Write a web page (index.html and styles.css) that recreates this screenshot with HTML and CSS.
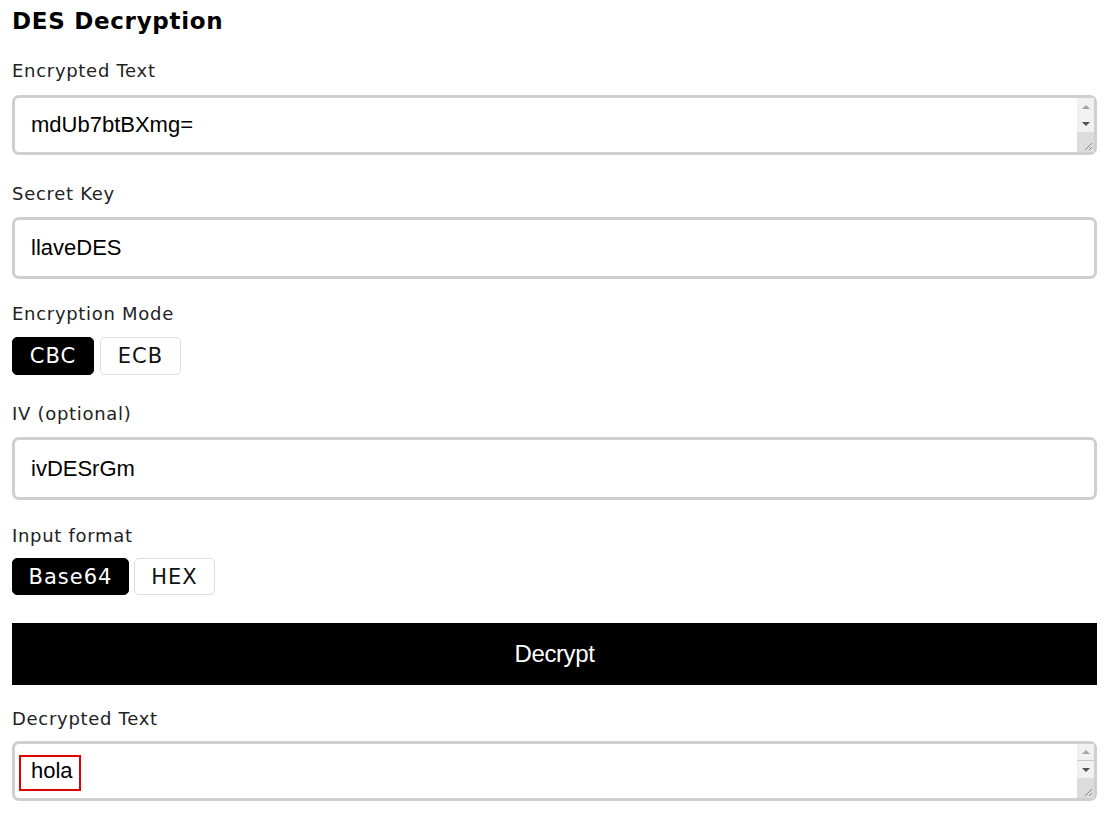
FILE: index.html
```html
<!DOCTYPE html>
<html>
<head>
<meta charset="utf-8">
<link rel="stylesheet" href="styles.css">
</head>
<body>
<div class="page">
  <h1 class="title">DES Decryption</h1>

  <div class="group g1">
    <div class="label">Encrypted Text</div>
    <div class="area-wrap">
      <textarea class="area" spellcheck="false">mdUb7btBXmg=</textarea>
      <div class="sb">
        <div class="sb-btn"><span class="tri-up"></span></div>
        <div class="sb-btn"><span class="tri-down"></span></div>
        <div class="sb-corner">
          <svg width="10" height="10" viewBox="0 0 10 10"><path d="M9 2 L2 9 M9 6 L6 9" stroke="#8a8a8a" stroke-width="1" fill="none"/></svg>
        </div>
      </div>
    </div>
  </div>

  <div class="group g2">
    <div class="label">Secret Key</div>
    <input class="field" type="text" value="llaveDES" spellcheck="false">
  </div>

  <div class="group g3">
    <div class="label">Encryption Mode</div>
    <div class="toggles">
      <button class="tog active">CBC</button>
      <button class="tog">ECB</button>
    </div>
  </div>

  <div class="group g4">
    <div class="label">IV (optional)</div>
    <input class="field field-iv" type="text" value="ivDESrGm" spellcheck="false">
  </div>

  <div class="group g5">
    <div class="label label-if">Input format</div>
    <div class="toggles toggles-if">
      <button class="tog active">Base64</button>
      <button class="tog">HEX</button>
    </div>
  </div>

  <button class="decrypt">Decrypt</button>

  <div class="group g6">
    <div class="label label-if">Decrypted Text</div>
    <div class="area-wrap">
      <textarea class="area" spellcheck="false">hola</textarea>
      <div class="sb">
        <div class="sb-btn sb-btn-sep"><span class="tri-up"></span></div>
        <div class="sb-btn"><span class="tri-down"></span></div>
        <div class="sb-corner">
          <svg width="10" height="10" viewBox="0 0 10 10"><path d="M9 2 L2 9 M9 6 L6 9" stroke="#8a8a8a" stroke-width="1" fill="none"/></svg>
        </div>
      </div>
      <span class="highlight"></span>
    </div>
  </div>
</div>
</body>
</html>
```

FILE: styles.css
```css
* { box-sizing: border-box; }
html, body { margin: 0; padding: 0; background: #fff; }
body { font-family: "DejaVu Sans", "Open Sans", sans-serif; color: #222; }

.page {
  width: 1111px;
  padding: 7px 14px 0 12px;
  display: flex;
  flex-direction: column;
}

.title {
  margin: 0 0 24px 0;
  font-family: "DejaVu Sans", sans-serif;
  font-size: 23px;
  line-height: 28px;
  font-weight: 700;
  color: #000;
  letter-spacing: 0.7px;
}

.label {
  font-size: 18px;
  line-height: 22px;
  margin-bottom: 14px;
  color: #222;
  letter-spacing: 0.7px;
  padding-top: 1px;
  height: 22px;
}
.label-if { margin-bottom: 12px; }
.g2 .label, .g3 .label, .g4 .label { margin-bottom: 13px; }

.group { display: flex; flex-direction: column; }
.g1 { margin-bottom: 27px; }
.g2 { margin-bottom: 23px; }
.g3 { margin-bottom: 27px; }
.g4 { margin-bottom: 24px; }
.g5 { margin-bottom: 28px; }

.area-wrap { position: relative; }

.area {
  display: block;
  width: 100%;
  height: 60px;
  border: 3px solid #cfcfcf;
  border-radius: 7px;
  padding: 14px 16px 0 16px;
  font-family: "Liberation Sans", Arial, sans-serif;
  font-size: 22px;
  line-height: 26px;
  color: #000;
  overflow: hidden;
  resize: none;
  outline: none;
  margin: 0;
}

.sb {
  position: absolute;
  right: 3px;
  top: 3px;
  bottom: 3px;
  width: 17px;
  background: #f1f1f1;
  display: flex;
  flex-direction: column;
}
.sb-btn {
  height: 17px;
  display: flex;
  align-items: center;
  justify-content: center;
}
.sb-btn-sep { border-bottom: 1px solid #c8c8c8; }
.tri-up {
  width: 0; height: 0;
  border-left: 4px solid transparent;
  border-right: 4px solid transparent;
  border-bottom: 4px solid #a3a3a3;
}
.tri-down {
  width: 0; height: 0;
  border-left: 4px solid transparent;
  border-right: 4px solid transparent;
  border-top: 4px solid #505050;
}
.sb-corner {
  flex: 1;
  background: #dcdcdc;
  display: flex;
  align-items: flex-end;
  justify-content: flex-end;
  padding: 0 1px 1px 0;
}

.field {
  display: block;
  width: 100%;
  height: 62px;
  border: 3px solid #cfcfcf;
  border-radius: 7px;
  padding: 0 16px;
  font-family: "Liberation Sans", Arial, sans-serif;
  font-size: 22px;
  color: #000;
  outline: none;
  margin: 0;
}
.field-iv { height: 63px; }

.toggles { display: flex; gap: 6px; height: 38px; }
.toggles-if { gap: 5px; height: 37px; }

.tog {
  font-family: "DejaVu Sans", sans-serif;
  font-size: 21px;
  letter-spacing: 1px;
  border: 1px solid #ddd;
  background: #fff;
  color: #111;
  border-radius: 5px;
  padding: 0;
  height: 100%;
  margin: 0;
  cursor: pointer;
}
.toggles .tog:first-child { width: 82px; }
.toggles .tog:last-child { width: 81px; }
.toggles-if .tog:first-child { width: 117px; }
.toggles-if .tog:last-child { width: 81px; }
.tog.active { background: #000; color: #fff; border-color: #000; }

.decrypt {
  display: block;
  width: 100%;
  height: 62px;
  margin: 0 0 22px 0;
  background: #000;
  color: #fff;
  border: none;
  border-radius: 0;
  font-family: "Liberation Sans", Arial, sans-serif;
  font-size: 24px;
  letter-spacing: -0.4px;
  cursor: pointer;
}

.highlight {
  position: absolute;
  left: 7px;
  top: 14px;
  width: 62px;
  height: 36px;
  border: 2px solid #e00000;
  pointer-events: none;
}
```
